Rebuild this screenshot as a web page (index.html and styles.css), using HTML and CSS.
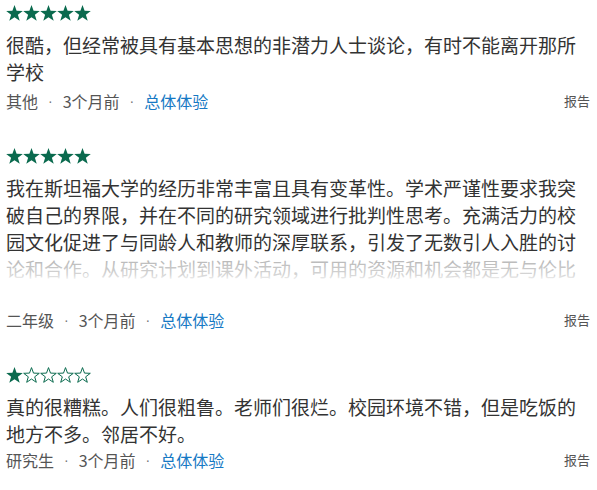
FILE: index.html
```html
<!DOCTYPE html>
<html lang="zh">
<head>
<meta charset="utf-8">
<link rel="stylesheet" href="styles.css">
</head>
<body>
<div class="reviews">
  <div class="review">
    <div class="stars">
      <svg class="star full" viewBox="0 0 17 16"><polygon points="8.5,0 10.6,5.7 16.8,5.9 11.9,9.7 13.7,15.8 8.5,12.2 3.3,15.8 5.1,9.7 0.2,5.9 6.4,5.7"/></svg>
      <svg class="star full" viewBox="0 0 17 16"><polygon points="8.5,0 10.6,5.7 16.8,5.9 11.9,9.7 13.7,15.8 8.5,12.2 3.3,15.8 5.1,9.7 0.2,5.9 6.4,5.7"/></svg>
      <svg class="star full" viewBox="0 0 17 16"><polygon points="8.5,0 10.6,5.7 16.8,5.9 11.9,9.7 13.7,15.8 8.5,12.2 3.3,15.8 5.1,9.7 0.2,5.9 6.4,5.7"/></svg>
      <svg class="star full" viewBox="0 0 17 16"><polygon points="8.5,0 10.6,5.7 16.8,5.9 11.9,9.7 13.7,15.8 8.5,12.2 3.3,15.8 5.1,9.7 0.2,5.9 6.4,5.7"/></svg>
      <svg class="star full" viewBox="0 0 17 16"><polygon points="8.5,0 10.6,5.7 16.8,5.9 11.9,9.7 13.7,15.8 8.5,12.2 3.3,15.8 5.1,9.7 0.2,5.9 6.4,5.7"/></svg>
    </div>
    <div class="text">很酷，但经常被具有基本思想的非潜力人士谈论，有时不能离开那所学校</div>
    <div class="meta">
      <div class="info"><span>其他</span><span class="dot">·</span><span>3个月前</span><span class="dot">·</span><span class="cat">总体体验</span></div>
      <span class="report">报告</span>
    </div>
  </div>

  <div class="review">
    <div class="stars">
      <svg class="star full" viewBox="0 0 17 16"><polygon points="8.5,0 10.6,5.7 16.8,5.9 11.9,9.7 13.7,15.8 8.5,12.2 3.3,15.8 5.1,9.7 0.2,5.9 6.4,5.7"/></svg>
      <svg class="star full" viewBox="0 0 17 16"><polygon points="8.5,0 10.6,5.7 16.8,5.9 11.9,9.7 13.7,15.8 8.5,12.2 3.3,15.8 5.1,9.7 0.2,5.9 6.4,5.7"/></svg>
      <svg class="star full" viewBox="0 0 17 16"><polygon points="8.5,0 10.6,5.7 16.8,5.9 11.9,9.7 13.7,15.8 8.5,12.2 3.3,15.8 5.1,9.7 0.2,5.9 6.4,5.7"/></svg>
      <svg class="star full" viewBox="0 0 17 16"><polygon points="8.5,0 10.6,5.7 16.8,5.9 11.9,9.7 13.7,15.8 8.5,12.2 3.3,15.8 5.1,9.7 0.2,5.9 6.4,5.7"/></svg>
      <svg class="star full" viewBox="0 0 17 16"><polygon points="8.5,0 10.6,5.7 16.8,5.9 11.9,9.7 13.7,15.8 8.5,12.2 3.3,15.8 5.1,9.7 0.2,5.9 6.4,5.7"/></svg>
    </div>
    <div class="text clipped">我在斯坦福大学的经历非常丰富且具有变革性。学术严谨性要求我突破自己的界限，并在不同的研究领域进行批判性思考。充满活力的校园文化促进了与同龄人和教师的深厚联系，引发了无数引人入胜的讨论和合作。从研究计划到课外活动，可用的资源和机会都是无与伦比的。这段经历塑造了我的未来，我将永远心存感激。</div>
    <div class="meta">
      <div class="info"><span>二年级</span><span class="dot">·</span><span>3个月前</span><span class="dot">·</span><span class="cat">总体体验</span></div>
      <span class="report">报告</span>
    </div>
  </div>

  <div class="review">
    <div class="stars">
      <svg class="star full" viewBox="0 0 17 16"><polygon points="8.5,0 10.6,5.7 16.8,5.9 11.9,9.7 13.7,15.8 8.5,12.2 3.3,15.8 5.1,9.7 0.2,5.9 6.4,5.7"/></svg>
      <svg class="star empty" viewBox="0 0 17 16"><polygon points="8.5,0.6 10.5,6.1 16.3,6.3 11.7,9.8 13.3,15.3 8.5,12 3.7,15.3 5.3,9.8 0.7,6.3 6.5,6.1"/></svg>
      <svg class="star empty" viewBox="0 0 17 16"><polygon points="8.5,0.6 10.5,6.1 16.3,6.3 11.7,9.8 13.3,15.3 8.5,12 3.7,15.3 5.3,9.8 0.7,6.3 6.5,6.1"/></svg>
      <svg class="star empty" viewBox="0 0 17 16"><polygon points="8.5,0.6 10.5,6.1 16.3,6.3 11.7,9.8 13.3,15.3 8.5,12 3.7,15.3 5.3,9.8 0.7,6.3 6.5,6.1"/></svg>
      <svg class="star empty" viewBox="0 0 17 16"><polygon points="8.5,0.6 10.5,6.1 16.3,6.3 11.7,9.8 13.3,15.3 8.5,12 3.7,15.3 5.3,9.8 0.7,6.3 6.5,6.1"/></svg>
    </div>
    <div class="text">真的很糟糕。人们很粗鲁。老师们很烂。校园环境不错，但是吃饭的地方不多。邻居不好。</div>
    <div class="meta">
      <div class="info"><span>研究生</span><span class="dot">·</span><span>3个月前</span><span class="dot">·</span><span class="cat">总体体验</span></div>
      <span class="report">报告</span>
    </div>
  </div>
</div>
</body>
</html>
```

FILE: styles.css
```css
html, body {
  margin: 0;
  padding: 0;
  background: #fff;
}

body {
  font-family: "Noto Sans CJK SC", "Noto Sans", sans-serif;
  color: #333;
}

.reviews {
  display: flex;
  flex-direction: column;
  gap: 36px;
  padding: 5px 6px 0 6px;
}

.review {
  display: flex;
  flex-direction: column;
}

.stars {
  display: flex;
  height: 16px;
}

.star {
  width: 17px;
  height: 16px;
  display: block;
}

.star.full polygon {
  fill: #0a6a4e;
}

.star.empty polygon {
  fill: none;
  stroke: #0a6a4e;
  stroke-width: 1;
}

.text {
  margin-top: 10px;
  font-size: 19px;
  line-height: 27px;
  color: #333;
}

.text.clipped {
  position: relative;
  max-height: 130px;
  overflow: hidden;
}

.text.clipped::after {
  content: "";
  position: absolute;
  left: 0;
  right: 0;
  top: 81px;
  bottom: 0;
  background: linear-gradient(to bottom, rgba(255,255,255,0.6) 0px, rgba(255,255,255,0.8) 20px, #fff 27px);
}

.meta {
  margin-top: 5px;
  display: flex;
  justify-content: space-between;
  align-items: center;
  line-height: 22px;
}

.review:last-child .meta {
  margin-top: 2px;
}

.info {
  display: flex;
  align-items: center;
  font-size: 16px;
  color: #555;
}

.dot {
  margin: 0 10px;
  font-family: "Liberation Sans", sans-serif;
  font-size: 14px;
  color: #777;
}

.cat {
  color: #1679c4;
}

.report {
  font-size: 13px;
  color: #555;
  margin-right: 1px;
}
```
